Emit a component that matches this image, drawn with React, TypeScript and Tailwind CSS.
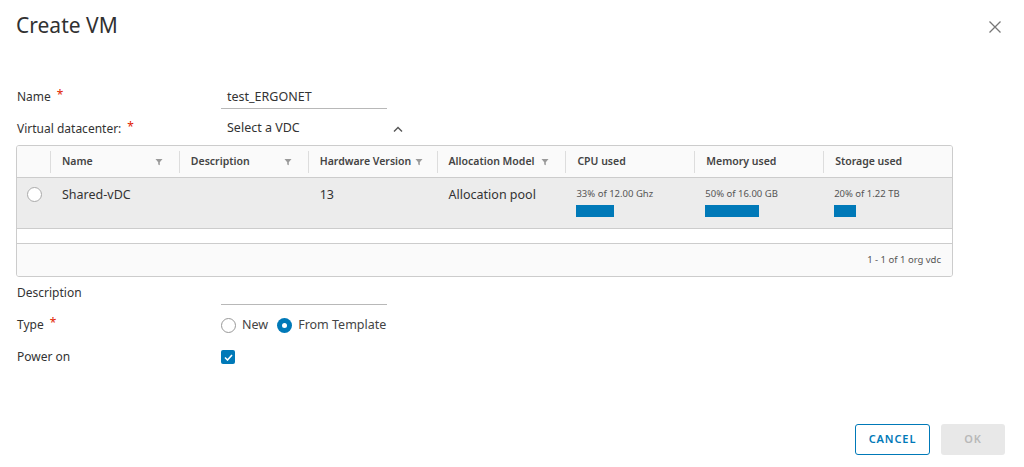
import React from "react";

const font = { fontFamily: '"Noto Sans", "Open Sans", Arial, sans-serif' };

function Funnel() {
  return (
    <svg width="8" height="8" viewBox="0 0 8 8" className="shrink-0">
      <path d="M0.5 1h7L4.8 4.2V7.2L3.2 6.4V4.2z" fill="#9a9a9a" />
    </svg>
  );
}

function Req() {
  return <span className="text-[#e12200] ml-[6px] text-[12px] relative top-[-2px]">*</span>;
}

export default function App() {
  const cols = [
    { t: "Name", f: true },
    { t: "Description", f: true },
    { t: "Hardware Version", f: true },
    { t: "Allocation Model", f: true },
    { t: "CPU used", f: false },
    { t: "Memory used", f: false },
    { t: "Storage used", f: false },
  ];
  const usage = [
    { t: "33% of 12.00 Ghz", w: 38 },
    { t: "50% of 16.00 GB", w: 54 },
    { t: "20% of 1.22 TB", w: 22 },
  ];
  return (
    <div style={font} className="w-[1024px] h-[467px] bg-white text-[#333] relative overflow-hidden">
      <div className="h-[50px] flex items-center justify-between pl-[16px] pr-[22px]">
        <div className="text-[21px] text-[#313131] leading-none">Create VM</div>
        <svg width="14" height="14" viewBox="0 0 14 14" className="mt-[4px]">
          <path d="M1.5 1.5L12.5 12.5M12.5 1.5L1.5 12.5" stroke="#777" strokeWidth="1.3" />
        </svg>
      </div>
      <div className="h-[30px]" />
      <div className="pl-[17px] pr-[71px] text-[12px]">
        <div className="h-[32px] flex items-center pt-[1px]">
          <div className="w-[204px] flex items-center">Name<Req /></div>
          <div className="w-[166px] h-[22px] border-b border-[#b8b8b8] pl-[6px] flex items-center text-[12.5px] mt-[2px]">test_ERGONET</div>
        </div>
        <div className="h-[32px] flex items-center pt-[1px]">
          <div className="w-[204px] flex items-center">Virtual datacenter:<Req /></div>
          <div className="w-[166px] pl-[6px] text-[12.5px]">Select a VDC</div>
          <svg width="10" height="7" viewBox="0 0 10 7" className="ml-[6px] mt-[2px]">
            <path d="M1 5.5L5 1.5L9 5.5" stroke="#555" strokeWidth="1.4" fill="none" />
          </svg>
        </div>
      </div>
      <div className="ml-[16px] mt-[1px] w-[937px] h-[132px] border border-[#ccc] rounded-[3px] overflow-hidden flex flex-col">
        <div className="h-[32px] shrink-0 bg-[#fafafa] border-b border-[#ccc] grid grid-cols-[33px_repeat(7,minmax(0,1fr))] items-center text-[10.5px] font-semibold text-[#444]">
          <div />
          {cols.map((c) => (
            <div key={c.t} className="h-[22px] border-l border-[#ddd] flex items-center justify-between gap-[4px] pl-[11px] pr-[16px] whitespace-nowrap">
              <span>{c.t}</span>
              {c.f && <Funnel />}
            </div>
          ))}
        </div>
        <div className="h-[51px] shrink-0 bg-[#ececec] border-b border-[#ccc] grid grid-cols-[33px_repeat(7,minmax(0,1fr))] items-start">
          <div className="pt-[9px] pl-[10px]">
            <div className="w-[15px] h-[15px] rounded-full border border-[#aaa] bg-white" />
          </div>
          <div className="pl-[12px] pt-[8px] text-[12.5px]">Shared-vDC</div>
          <div />
          <div className="pl-[12px] pt-[8px] text-[12.5px]">13</div>
          <div className="pl-[12px] pt-[8px] text-[12.5px]">Allocation pool</div>
          {usage.map((u) => (
            <div key={u.t} className="pl-[11px] pt-[10px]">
              <div className="text-[9.5px] leading-[12px] text-[#555]">{u.t}</div>
              <div className="h-[12px] bg-[#0079b8] mt-[5px]" style={{ width: u.w }} />
            </div>
          ))}
        </div>
        <div className="h-[15px] shrink-0 bg-white border-b border-[#ccc]" />
        <div className="flex-1 bg-[#fafafa] flex items-center justify-end pr-[11px] text-[9.5px] text-[#555]">1 - 1 of 1 org vdc</div>
      </div>
      <div className="pl-[17px] text-[12px]">
        <div className="h-[32px] flex items-center">
          <div className="w-[204px]">Description</div>
          <div className="w-[166px] h-[22px] border-b border-[#b8b8b8] mt-[1px]" />
        </div>
        <div className="h-[32px] flex items-center">
          <div className="w-[204px] flex items-center">Type<Req /></div>
          <div className="flex items-center text-[12.5px] text-[#444]">
            <div className="w-[15px] h-[15px] rounded-full border border-[#999] bg-white" />
            <span className="ml-[6px]">New</span>
            <div className="ml-[9px] w-[15px] h-[15px] rounded-full bg-[#0079b8] flex items-center justify-center">
              <div className="w-[5px] h-[5px] rounded-full bg-white" />
            </div>
            <span className="ml-[6px]">From Template</span>
          </div>
        </div>
        <div className="h-[32px] flex items-center">
          <div className="w-[204px]">Power on</div>
          <div className="w-[14px] h-[14px] rounded-[2px] bg-[#0079b8] flex items-center justify-center">
            <svg width="9" height="7" viewBox="0 0 9 7">
              <path d="M1 3.5L3.5 6L8 1" stroke="#fff" strokeWidth="1.6" fill="none" />
            </svg>
          </div>
        </div>
      </div>
      <div className="absolute left-0 right-0 top-[424px] flex justify-end gap-[11px] pr-[19px]">
        <button className="w-[75px] h-[31px] border border-[#0079b8] rounded-[3px] text-[#0079b8] text-[11px] font-semibold tracking-[0.08em] bg-white">CANCEL</button>
        <button className="w-[64px] h-[31px] rounded-[3px] bg-[#e8e8e8] text-[#b8b8b8] text-[11px] font-semibold tracking-[0.08em]">OK</button>
      </div>
    </div>
  );
}
